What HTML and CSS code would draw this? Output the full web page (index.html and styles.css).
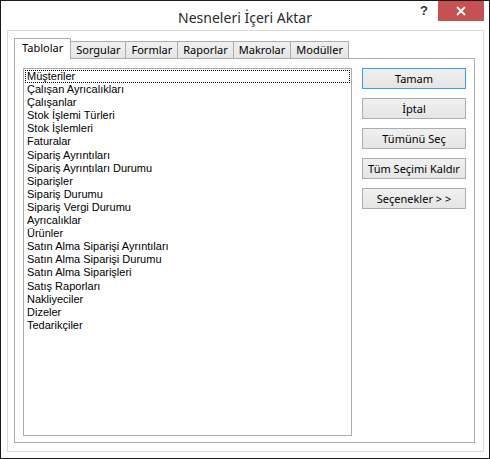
FILE: index.html
```html
<!DOCTYPE html>
<html lang="tr">
<head>
<meta charset="utf-8">
<title>Nesneleri İçeri Aktar</title>
<link rel="stylesheet" href="styles.css">
</head>
<body>
<div class="window">
  <div class="titlebar">
    <div class="title">Nesneleri İçeri Aktar</div>
    <div class="help">?</div>
    <div class="close">
      <svg width="10" height="10" viewBox="0 0 10 10"><path d="M1 1L9 9M9 1L1 9" stroke="#fff" stroke-width="1.8"/></svg>
    </div>
  </div>
  <div class="frame">
    <div class="tabs">
      <div class="tab active">Tablolar</div>
      <div class="tab">Sorgular</div>
      <div class="tab">Formlar</div>
      <div class="tab">Raporlar</div>
      <div class="tab">Makrolar</div>
      <div class="tab">Modüller</div>
    </div>
    <div class="panel">
      <div class="list">
        <div class="item focus">Müşteriler</div>
        <div class="item">Çalışan Ayrıcalıkları</div>
        <div class="item">Çalışanlar</div>
        <div class="item">Stok İşlemi Türleri</div>
        <div class="item">Stok İşlemleri</div>
        <div class="item">Faturalar</div>
        <div class="item">Sipariş Ayrıntıları</div>
        <div class="item">Sipariş Ayrıntıları Durumu</div>
        <div class="item">Siparişler</div>
        <div class="item">Sipariş Durumu</div>
        <div class="item">Sipariş Vergi Durumu</div>
        <div class="item">Ayrıcalıklar</div>
        <div class="item">Ürünler</div>
        <div class="item">Satın Alma Siparişi Ayrıntıları</div>
        <div class="item">Satın Alma Siparişi Durumu</div>
        <div class="item">Satın Alma Siparişleri</div>
        <div class="item">Satış Raporları</div>
        <div class="item">Nakliyeciler</div>
        <div class="item">Dizeler</div>
        <div class="item">Tedarikçiler</div>
      </div>
      <div class="buttons">
        <button class="btn default">Tamam</button>
        <button class="btn">İptal</button>
        <button class="btn">Tümünü Seç</button>
        <button class="btn">Tüm Seçimi Kaldır</button>
        <button class="btn">Seçenekler &gt; &gt;</button>
      </div>
    </div>
  </div>
</div>
</body>
</html>
```
FILE: styles.css
```css
* { box-sizing: border-box; }
html, body { margin: 0; padding: 0; background: #fff; }
body { width: 490px; height: 459px; overflow: hidden; }

.window {
  width: 490px;
  height: 459px;
  border: 1px solid #1a1a1a;
  background: #fff;
  display: flex;
  flex-direction: column;
  font-family: "Noto Sans", "Liberation Sans", sans-serif;
  color: #000;
}

.titlebar {
  position: relative;
  height: 29px;
  flex: none;
}
.title {
  text-align: center;
  font-size: 14px;
  line-height: 29px;
  color: #2b2b2b;
  padding-top: 2px;
}
.help {
  position: absolute;
  left: 419px;
  top: 2px;
  font-family: "Liberation Sans", sans-serif;
  font-weight: bold;
  font-size: 13px;
  color: #333;
}
.close {
  position: absolute;
  left: 437px;
  top: 0;
  width: 46px;
  height: 20px;
  background: #c75050;
  display: flex;
  align-items: center;
  justify-content: center;
}

.frame {
  flex: 1;
  margin: 0 5px 6px 6px;
  border: 1px solid #dadada;
  padding: 7px 8px 8px 6px;
  display: flex;
  flex-direction: column;
}

.tabs {
  display: flex;
  align-items: flex-end;
  height: 20px;
  flex: none;
  font-size: 11px;
}
.tab {
  height: 17px;
  border: 1px solid #acacac;
  border-bottom: none;
  border-left: none;
  background: linear-gradient(#f0f0f0, #e5e5e5);
  padding: 0 5px;
  line-height: 15px;
  color: #000;
}
.tab.active {
  height: 21px;
  margin-bottom: -1px;
  background: #fff;
  border-left: 1px solid #acacac;
  position: relative;
  z-index: 1;
  padding: 0 7px;
  line-height: 18px;
}

.panel {
  flex: 1;
  border: 1px solid #acacac;
  padding: 9px 7px 6px 8px;
  display: flex;
  gap: 10px;
}

.list {
  width: 329px;
  border: 1px solid #acacac;
  padding: 1px 1px;
  font-family: "Liberation Sans", sans-serif;
  font-size: 11px;
}
.item {
  height: 13.1px;
  line-height: 13px;
  padding-left: 2px;
  white-space: nowrap;
}
.item.focus {
  outline: 1px dotted #000;
  outline-offset: -1px;
}

.buttons {
  display: flex;
  flex-direction: column;
  gap: 9px;
  width: 104px;
}
.btn {
  height: 21px;
  border: 1px solid #adadad;
  background: linear-gradient(#f0f0f0, #e5e5e5);
  font-family: "Noto Sans", "Liberation Sans", sans-serif;
  font-size: 11px;
  color: #000;
  padding: 0;
  margin: 0;
}
.btn.default {
  border-color: #3c9cf6;
}
```
